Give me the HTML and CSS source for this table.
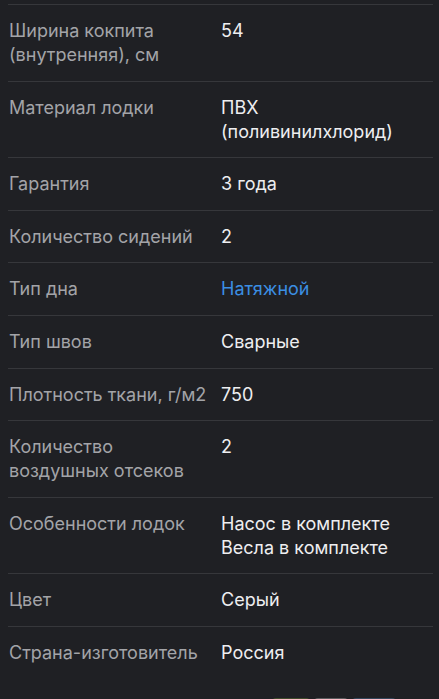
FILE: index.html
```html
<!DOCTYPE html>
<html lang="ru">

<head>
    <meta charset="UTF-8">
    <meta name="viewport" content="width=device-width, initial-scale=1.0">
    <title>Характеристики</title>
    <link rel="stylesheet" href="styles.css">
</head>

<body>
    <main class="specs">
        <div class="row">
            <div class="label">Ширина кокпита (внутренняя), см</div>
            <div class="value">54</div>
        </div>
        <div class="row">
            <div class="label">Материал лодки</div>
            <div class="value">ПВХ (поливинилхлорид)</div>
        </div>
        <div class="row">
            <div class="label">Гарантия</div>
            <div class="value">3 года</div>
        </div>
        <div class="row">
            <div class="label">Количество сидений</div>
            <div class="value">2</div>
        </div>
        <div class="row">
            <div class="label">Тип дна</div>
            <div class="value"><a class="link" href="#">Натяжной</a></div>
        </div>
        <div class="row">
            <div class="label">Тип швов</div>
            <div class="value">Сварные</div>
        </div>
        <div class="row">
            <div class="label">Плотность ткани, г/м2</div>
            <div class="value">750</div>
        </div>
        <div class="row">
            <div class="label">Количество воздушных отсеков</div>
            <div class="value">2</div>
        </div>
        <div class="row">
            <div class="label">Особенности лодок</div>
            <div class="value">Насос в комплекте<br>Весла в комплекте</div>
        </div>
        <div class="row">
            <div class="label">Цвет</div>
            <div class="value">Серый</div>
        </div>
        <div class="row">
            <div class="label">Страна-изготовитель</div>
            <div class="value">Россия</div>
        </div>
    </main>
    <div class="thumbs">
        <span class="thumb thumb-green"></span>
        <span class="thumb thumb-gray"></span>
        <span class="thumb thumb-blue"></span>
    </div>
</body>

</html>
```

FILE: styles.css
```css
html {
    background: #1f2024;
}

body {
    margin: 0;
    height: 699px;
    overflow: hidden;
    font-family: Inter, Roboto, 'Noto Sans', sans-serif;
    font-size: 18px;
    line-height: 24px;
    color: #eeeef0;
}

.specs {
    padding: 4px 6px 0 8px;
}

.row {
    display: flex;
    border-top: 1px solid #36373b;
    padding: 14px 0 13.6px 1px;
}

.label {
    width: 212px;
    flex-shrink: 0;
    padding-right: 4px;
    box-sizing: border-box;
    color: #a3a4a8;
}

.value {
    flex: 1;
    padding-right: 30px;
}

.link {
    color: #3b8ee2;
    text-decoration: none;
}

.thumbs {
    display: flex;
    gap: 4px;
    padding: 19px 0 0 272px;
}

.thumb {
    height: 6px;
    border-radius: 4px 4px 0 0;
}

.thumb-green {
    width: 38px;
    background: #3f4a2c;
}

.thumb-gray {
    width: 34px;
    background: #5a5b5d;
}

.thumb-blue {
    width: 44px;
    background: #34465a;
}
```
